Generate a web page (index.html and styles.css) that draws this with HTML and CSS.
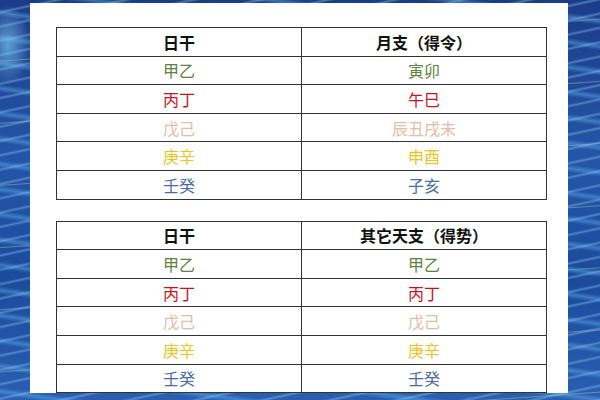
FILE: index.html
```html
<!DOCTYPE html>
<html lang="zh">
<head>
<meta charset="utf-8">
<link rel="stylesheet" href="styles.css">
</head>
<body>
<div class="panel">
  <table class="tbl">
    <tr class="head"><th>日干</th><th>月支（得令）</th></tr>
    <tr class="c-wood"><td>甲乙</td><td>寅卯</td></tr>
    <tr class="c-fire"><td>丙丁</td><td>午巳</td></tr>
    <tr class="c-earth"><td>戊己</td><td>辰丑戌未</td></tr>
    <tr class="c-metal"><td>庚辛</td><td>申酉</td></tr>
    <tr class="c-water"><td>壬癸</td><td>子亥</td></tr>
  </table>
  <table class="tbl">
    <tr class="head"><th>日干</th><th>其它天支（得势）</th></tr>
    <tr class="c-wood"><td>甲乙</td><td>甲乙</td></tr>
    <tr class="c-fire"><td>丙丁</td><td>丙丁</td></tr>
    <tr class="c-earth"><td>戊己</td><td>戊己</td></tr>
    <tr class="c-metal"><td>庚辛</td><td>庚辛</td></tr>
    <tr class="c-water"><td>壬癸</td><td>壬癸</td></tr>
  </table>
</div>
</body>
</html>
```
FILE: styles.css
```css
html, body {
  margin: 0;
  padding: 0;
  width: 600px;
  height: 400px;
  overflow: hidden;
}
body {
  font-family: "Noto Sans CJK SC", "Noto Sans", sans-serif;
  background:
    radial-gradient(ellipse 22px 40px at 8px 45px, rgba(120,200,240,0.7), rgba(120,200,240,0) 100%),
    repeating-linear-gradient(168deg, rgba(140,200,255,0) 0px, rgba(140,200,255,0) 10px, rgba(150,210,255,0.4) 12px, rgba(140,200,255,0) 14px),
    repeating-linear-gradient(188deg, rgba(90,160,230,0) 0px, rgba(90,160,230,0) 17px, rgba(100,180,240,0.45) 21px, rgba(90,160,230,0) 25px),
    repeating-linear-gradient(176deg, rgba(200,240,160,0) 0px, rgba(200,240,160,0) 60px, rgba(210,240,170,0.35) 61px, rgba(200,240,160,0) 62px),
    linear-gradient(180deg, #1c3c88 0%, #2456a8 40%, #1c4b9c 70%, #2a5fb0 100%);
  padding: 3px 32px 7px 30px;
  box-sizing: border-box;
}
.panel {
  background: #fff;
  height: 390px;
  padding: 24px 21px 0 26px;
  box-sizing: border-box;
  display: flex;
  flex-direction: column;
  gap: 21px;
}
.tbl {
  width: 491px;
  border-collapse: collapse;
  table-layout: fixed;
  font-size: 16px;
}
.tbl th, .tbl td {
  border: 1px solid #333;
  height: 27.6px;
  padding: 0;
  text-align: center;
  line-height: 20px;
  width: 50%;
}
.tbl th {
  font-weight: bold;
  color: #111;
}
.c-wood { color: #5e8240; }
.c-fire { color: #c8141e; }
.c-earth { color: #e3bda6; }
.c-metal { color: #f0c21c; }
.c-water { color: #4a6aa8; }
```
